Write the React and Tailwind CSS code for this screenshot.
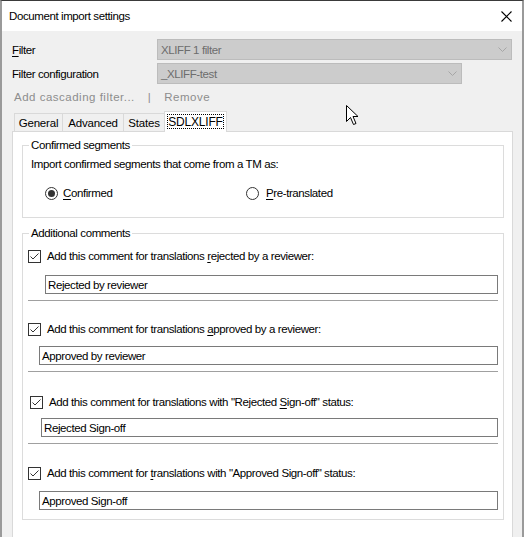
import React from "react";

const font = { fontFamily: '"Liberation Sans", Arial, sans-serif' };

function Check() {
  return (
    <span className="flex h-[13px] w-[13px] shrink-0 items-center justify-center border border-[#333333] bg-white">
      <svg width="11" height="11" viewBox="0 0 11 11">
        <path d="M1.5 5.5 L4 8 L9.5 2.5" fill="none" stroke="#333333" strokeWidth="1" />
      </svg>
    </span>
  );
}

function Radio({ checked }) {
  return (
    <span className="flex h-[13px] w-[13px] shrink-0 items-center justify-center rounded-full border border-[#333333] bg-white">
      {checked && <span className="h-[7px] w-[7px] rounded-full bg-[#333333]" />}
    </span>
  );
}

function Chevron() {
  return (
    <svg width="9" height="5" viewBox="0 0 9 5">
      <path d="M0.5 0.5 L4.5 4.5 L8.5 0.5" fill="none" stroke="#a6a6a6" strokeWidth="1" />
    </svg>
  );
}

function CommentRow({ cbPad, label, u, after, inputPad, value, mt }) {
  return (
    <div className={mt}>
      <div className={`flex h-[14px] items-center ${cbPad}`}>
        <Check />
        <span className="ml-[6px] whitespace-nowrap">
          {label}
          <span className="underline underline-offset-2">{u}</span>
          {after}
        </span>
      </div>
      <div className={inputPad}>
        <div className="flex h-[19px] items-center border border-[#7a7a7a] bg-white px-[2px]">
          {value}
        </div>
      </div>
    </div>
  );
}

export default function App() {
  return (
    <div
      className="relative h-[537px] w-[524px] overflow-hidden border-x-2 border-t border-x-[#9a9a9a] border-t-[#3a3a3a] bg-[#f0f0f0] text-[11.5px] leading-[14px] tracking-[-0.4px] text-black"
      style={font}
    >
      {/* title bar */}
      <div className="flex h-[30px] items-center justify-between bg-white pl-[7px] pr-[10px]">
        <span>Document import settings</span>
        <svg width="11" height="11" viewBox="0 0 11 11">
          <path d="M0.5 0.5 L10.5 10.5 M10.5 0.5 L0.5 10.5" stroke="#000" strokeWidth="1.1" />
        </svg>
      </div>

      <div className="pl-[10px] pt-[8px]">
        {/* Filter */}
        <div className="flex h-[21px] items-center">
          <span className="w-[145px]">
            <span className="underline underline-offset-2">F</span>ilter
          </span>
          <div className="flex h-[21px] w-[355px] items-center justify-between border border-[#bcbcbc] bg-[#cccccc] pl-[3px] pr-[4px] text-[#6d6d6d]">
            <span>XLIFF 1 filter</span>
            <Chevron />
          </div>
        </div>
        <div className="mt-[3px] flex h-[21px] items-center">
          <span className="w-[145px]">Filter configuration</span>
          <div className="flex h-[21px] w-[305px] items-center justify-between border border-[#bcbcbc] bg-[#cccccc] pl-[3px] pr-[4px] text-[#6d6d6d]">
            <span>_XLIFF-test</span>
            <Chevron />
          </div>
        </div>
        <div className="mt-[3px] flex h-[20px] items-center pl-[2px] tracking-[0.5px] text-[#8d8d8d]">
          <span>Add cascading filter...</span>
          <span className="ml-[13px]">|</span>
          <span className="ml-[13px]">Remove</span>
        </div>

        {/* tabs */}
        <div className="mt-[5px] flex h-[19px] items-end pl-[2px] tracking-[-0.2px]">
          <div className="flex h-[18px] w-[48px] items-center justify-center border-l border-t border-[#d9d9d9] bg-[#f0f0f0]">General</div>
          <div className="flex h-[18px] w-[61px] items-center justify-center border-l border-t border-[#d9d9d9] bg-[#f0f0f0]">Advanced</div>
          <div className="flex h-[18px] w-[41px] items-center justify-center border-l border-t border-[#d9d9d9] bg-[#f0f0f0]">States</div>
          <div className="relative z-10 -mb-px flex h-[21px] w-[63px] items-center justify-center border-x border-t border-[#d9d9d9] bg-white p-[2px] pb-[3px] text-[12px]">
            <div className="flex h-full w-full items-center justify-center border border-dotted border-black">SDLXLIFF</div>
          </div>
        </div>

        {/* panel */}
        <div className="h-[420px] w-[501px] border border-[#d9d9d9] bg-white pl-[9px] pt-[6px]">
          <fieldset className="w-[482px] border border-[#dcdcdc] pb-[17px] pl-[8px]">
            <legend className="-ml-[2px] px-[2px] leading-[15px]">Confirmed segments</legend>
            <div className="mt-[4px] h-[14px]">Import confirmed segments that come from a TM as:</div>
            <div className="mt-[15px] flex h-[14px] items-center pl-[14px]">
              <div className="flex w-[201px] items-center">
                <Radio checked />
                <span className="ml-[5px]">
                  <span className="underline underline-offset-2">C</span>onfirmed
                </span>
              </div>
              <div className="flex items-center">
                <Radio />
                <span className="ml-[7px]">
                  <span className="underline underline-offset-2">P</span>re-translated
                </span>
              </div>
            </div>
          </fieldset>

          <fieldset className="mt-[8px] w-[482px] border border-[#dcdcdc] pb-[9px] pl-[5px] pr-[5px]">
            <legend className="ml-[1px] px-[2px] leading-[15px]">Additional comments</legend>
            <CommentRow
              mt="mt-[8px]"
              cbPad=""
              label="Add this comment for translations "
              u="r"
              after="ejected by a reviewer:"
              inputPad="mt-[12px] pl-[17px]"
              value="Rejected by reviewer"
            />
            <div className="mt-[6px] h-px bg-[#a0a0a0]" />
            <CommentRow
              mt="mt-[21px]"
              cbPad=""
              label="Add this comment for translations "
              u="a"
              after="pproved by a reviewer:"
              inputPad="mt-[10px] pl-[11px]"
              value="Approved by reviewer"
            />
            <div className="mt-[6px] h-px bg-[#a0a0a0]" />
            <CommentRow
              mt="mt-[23px]"
              cbPad="pl-[2px]"
              label={'Add this comment for translations with "Rejected '}
              u="S"
              after={'ign-off" status:'}
              inputPad="mt-[9px] pl-[13px]"
              value="Rejected Sign-off"
            />
            <div className="mt-[6px] h-px bg-[#a0a0a0]" />
            <CommentRow
              mt="mt-[22px]"
              cbPad=""
              label="Add this comment for "
              u="t"
              after={'ranslations with "Approved Sign-off" status:'}
              inputPad="mt-[11px] pl-[11px]"
              value="Approved Sign-off"
            />
          </fieldset>
        </div>
      </div>

      {/* mouse cursor */}
      <svg className="absolute left-[344px] top-[104px]" width="13" height="21" viewBox="0 0 13 21">
        <path
          d="M0.5 0.5 L0.5 16.5 L4.5 12.5 L7.5 19.5 L10 18.5 L7 11.5 L12 11.5 Z"
          fill="#fff"
          stroke="#000"
          strokeWidth="1"
          strokeLinejoin="miter"
        />
      </svg>
    </div>
  );
}
